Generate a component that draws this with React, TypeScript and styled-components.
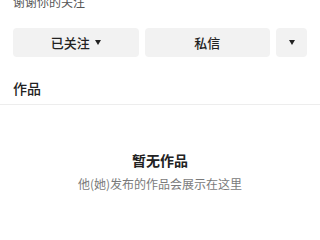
import React from 'react';
import styled, { createGlobalStyle } from 'styled-components';

const GlobalStyle = createGlobalStyle`
  html, body {
    margin: 0;
    padding: 0;
    background: #fff;
  }
  body {
    font-family: "Noto Sans CJK SC", "Noto Sans", sans-serif;
  }
`;

const Page = styled.div`
  width: 320px;
  height: 240px;
  overflow: hidden;
  background: #fff;
`;

const Thanks = styled.div`
  margin-top: -6px;
  padding: 0 13px;
  font-size: 12px;
  line-height: 16px;
  color: #555;
`;

const Actions = styled.div`
  display: flex;
  gap: 6px;
  padding: 0 13px;
  margin-top: 18px;
`;

const ActionButton = styled.button<{ $narrow?: boolean }>`
  flex: ${(p) => (p.$narrow ? '0 0 31px' : '1 1 0')};
  height: 29px;
  border: none;
  border-radius: 4px;
  background: #f2f2f2;
  color: #222;
  font-family: "Noto Sans CJK SC", sans-serif;
  font-size: 13px;
  font-weight: 500;
  display: flex;
  align-items: center;
  justify-content: center;
  gap: 5px;
  padding: 0;
`;

const Caret = styled.span`
  width: 0;
  height: 0;
  border-left: 3.5px solid transparent;
  border-right: 3.5px solid transparent;
  border-top: 5px solid #222;
`;

const SectionTitle = styled.div`
  margin-top: 21px;
  padding: 0 13px;
  height: 26px;
  font-size: 14px;
  font-weight: 500;
  color: #222;
  line-height: 20px;
  border-bottom: 1px solid #ededed;
`;

const Empty = styled.div`
  display: flex;
  flex-direction: column;
  align-items: center;
  margin-top: 45px;
`;

const EmptyTitle = styled.div`
  font-size: 14px;
  font-weight: 700;
  color: #222;
  line-height: 20px;
`;

const EmptyText = styled.div`
  margin-top: 6px;
  font-size: 12px;
  color: #7a7a7a;
  line-height: 16px;
`;

export default function App() {
  return (
    <Page>
      <GlobalStyle />
      <Thanks>谢谢你的关注</Thanks>
      <Actions>
        <ActionButton>
          已关注 <Caret />
        </ActionButton>
        <ActionButton>私信</ActionButton>
        <ActionButton $narrow>
          <Caret />
        </ActionButton>
      </Actions>
      <SectionTitle>作品</SectionTitle>
      <Empty>
        <EmptyTitle>暂无作品</EmptyTitle>
        <EmptyText>他(她)发布的作品会展示在这里</EmptyText>
      </Empty>
    </Page>
  );
}
